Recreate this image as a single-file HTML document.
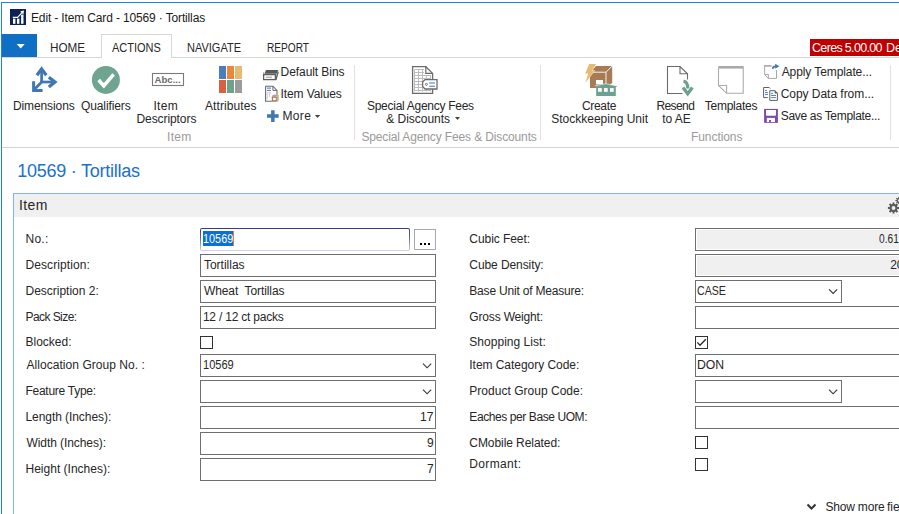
<!DOCTYPE html>
<html><head><meta charset="utf-8"><style>
*{box-sizing:border-box;margin:0;padding:0}
html,body{width:899px;height:514px;overflow:hidden;background:#fff;font-family:"Liberation Sans",sans-serif;position:relative}
.a{position:absolute}
.t{position:absolute;white-space:nowrap;font-family:"Liberation Sans",sans-serif}
.inp{position:absolute;height:23px;border:1px solid #6f6f6f;background:#fff}
.ro{background:#f0f0f0;box-shadow:inset 0 0 0 1px #fff}
.chk{position:absolute;width:13px;height:13px;border:1px solid #333;background:#fff}
svg{position:absolute;overflow:visible}

</style></head><body>
<!-- window frame -->
<div class="a" style="left:1px;top:2px;width:1px;height:512px;background:#1a84d8"></div>
<div class="a" style="left:1px;top:2px;width:898px;height:1px;background:#1a84d8"></div>
<!-- app icon -->
<svg style="left:0;top:0" width="40" height="40">
  <rect x="10" y="9" width="16" height="16" fill="#0b2252"/>
  <rect x="13" y="18.6" width="2.4" height="5.2" fill="#fff"/>
  <rect x="17" y="18.6" width="2.4" height="5.2" fill="#fff"/>
  <rect x="21.1" y="14.6" width="2.4" height="9.2" fill="#fff"/>
  <path d="M12.8 17.4 H17.6 L22.2 12.4" stroke="#fff" stroke-width="1.1" fill="none"/>
  <path d="M20.2 11.2 L24 10.6 L23.4 14.4 Z" fill="#fff"/>
</svg>
<!-- tab strip -->
<div class="a" style="left:2px;top:57px;width:897px;height:1px;background:#d6d6d6"></div>
<div class="a" style="left:2px;top:34px;width:35px;height:23px;background:#0f6fc5"></div>
<svg style="left:0;top:0" width="40" height="60"><path d="M16.7 44 L24.7 44 L20.7 48.6 Z" fill="#fff"/></svg>
<div class="a" style="left:101px;top:34px;width:71px;height:24px;border:1px solid #d6d6d6;border-bottom:none;background:#fff"></div>
<div class="a" style="left:810px;top:39px;width:89px;height:17px;background:#c00000"></div>
<!-- ribbon separators -->
<div class="a" style="left:354px;top:65px;width:1px;height:75px;background:#e2e2e2"></div>
<div class="a" style="left:540px;top:65px;width:1px;height:75px;background:#e2e2e2"></div>
<div class="a" style="left:890px;top:65px;width:1px;height:75px;background:#e2e2e2"></div>
<div class="a" style="left:2px;top:147px;width:897px;height:1px;background:#d5d5d5"></div>
<!-- ribbon icons -->
<svg style="left:0;top:0" width="899" height="150">
  <!-- Dimensions -->
  <g stroke="#3f77b5" fill="none">
    <path d="M41.6 82 V69" stroke-width="2.7"/>
    <path d="M36.9 75.3 L41.6 69 L46.3 75.3" stroke-width="3.2"/>
    <path d="M40.5 82 H54.5" stroke-width="2.7"/>
    <path d="M48.8 77.3 L55 82 L48.8 86.9" stroke-width="3.2"/>
    <path d="M42.5 81.2 L35 88.7" stroke-width="2.7"/>
    <path d="M33.6 81.3 V90.5 H42.6" stroke-width="3"/>
  </g>
  <!-- Qualifiers -->
  <circle cx="105.9" cy="79.9" r="14" fill="#6fa491"/>
  <path d="M98.6 80 L103.8 85.8 L113.6 74.4" stroke="#fff" stroke-width="3.6" fill="none"/>
  <!-- Item Descriptors -->
  <rect x="152.5" y="73.5" width="31" height="12" fill="#fff" stroke="#7a7a7a" stroke-width="1.1"/>
  <text x="154.6" y="83" font-family="Liberation Sans" font-weight="bold" font-size="9.6" fill="#6a6a6a" textLength="26" lengthAdjust="spacingAndGlyphs">Abc...</text>
  <!-- Attributes -->
  <rect x="219" y="66" width="7" height="13" fill="#4a7ebb"/>
  <rect x="227" y="66" width="7" height="13" fill="#e8873e"/>
  <rect x="235" y="66" width="7" height="13" fill="#e8b976"/>
  <rect x="219" y="80" width="7" height="13" fill="#d9603f"/>
  <rect x="227" y="80" width="7" height="13" fill="#6da08e"/>
  <rect x="235" y="80" width="7" height="13" fill="#9b9b9b"/>
  <!-- Default Bins -->
  <path d="M266 70.1 H278.3 L276.7 73.8 H264.4 Z" fill="#5a5a5a"/>
  <path d="M263 71.5 V73.8 H264.4 Z" fill="#9a9a9a"/>
  <rect x="263.6" y="74.6" width="11.8" height="5" fill="none" stroke="#5f5f5f" stroke-width="1.3"/>
  <path d="M266 77.2 H272" stroke="#9a9a9a" stroke-width="1"/>
  <path d="M275.8 80 L278.2 71.6" stroke="#5f5f5f" stroke-width="1.4"/>
  <!-- Item Values -->
  <path d="M277 94.8 V90.4 L272.9 86.2 H265.6 V101.3 H271.8" fill="none" stroke="#6a6a6a" stroke-width="1.1"/>
  <path d="M272.9 86.2 V90.4 H277" fill="none" stroke="#6a6a6a" stroke-width="1"/>
  <path d="M267 88.1 H271 M267 90.4 H271" stroke="#3f78b5" stroke-width="1"/>
  <path d="M267.2 92.8 H271 M267.2 92.8 V99.5 M269.5 92.8 V97" stroke="#c4c4c4" stroke-width="0.8" fill="none"/>
  <path d="M271.8 96 L273.3 94.8 H278.5 V100.5 L277.2 101.8 H271.8 Z" fill="#a27a55"/>
  <path d="M271.8 96 H277.2 V101.8 M277.2 96 L278.5 94.8" stroke="#fff" stroke-width="0.6" fill="none"/>
  <rect x="273" y="97.8" width="2.8" height="2.4" fill="#fff"/>
  <!-- More plus -->
  <path d="M267 116.1 H278.7 M272.85 110.2 V122" stroke="#3f78b5" stroke-width="3.5"/>
  <!-- More arrow -->
  <path d="M314.8 115 H320.2 L317.5 118.1 Z" fill="#444"/>
  <!-- Special Agency Fees icon -->
  <path d="M412.6 66.7 H425.8 L432.6 73.4 V93.3 H412.6 Z" fill="#fff" stroke="#6b6b6b" stroke-width="1.3"/>
  <path d="M425.8 66.7 V73.4 H432.6" fill="none" stroke="#6b6b6b" stroke-width="1.2"/>
  <g stroke="#bdbdbd" stroke-width="1">
    <path d="M414.5 69.5 V91.5 M418.5 69.5 V91.5 M422.5 69.5 V91.5 M426.5 75 V91.5 M430.5 75 V91.5"/>
    <path d="M414.5 69.5 H424 M414.5 72.5 H424 M414.5 75.5 H430.5 M414.5 78.5 H430.5 M414.5 81.5 H422 M414.5 84.5 H422 M414.5 87.5 H422 M414.5 90.5 H430.5"/>
  </g>
  <path d="M425 79.6 H437 V89 H425 L422.6 86.5 V82.1 Z" fill="#fff" stroke="#6b6b6b" stroke-width="1.3"/>
  <circle cx="426.4" cy="84.4" r="1" fill="none" stroke="#6b6b6b" stroke-width="0.9"/>
  <path d="M429.2 83 H435 M429.2 86.3 H435" stroke="#3f78b5" stroke-width="1.1"/>
  <!-- more arrow for & Discounts -->
  <path d="M455 117 H460 L457.5 120 Z" fill="#444"/>
  <!-- Create SKU -->
  <path d="M590 72 L596 66 H612.2 V83 L606 88.1 H590 Z" fill="#a87b56"/>
  <path d="M589.8 72.2 H606 L612.4 65.8 M606 72.2 V84" stroke="#fff" stroke-width="0.9" fill="none"/>
  <path d="M588.8 63.5 H596.5 L592.6 70.6 L595.2 70.6 L584.8 83.5 L587.8 73.8 L584.8 73.8 Z" fill="#fff"/>
  <path d="M589.2 64 H595.9 L592 71 H594.5 L585.2 83 L588.3 73.4 H585.2 Z" fill="#e8ba6f"/>
  <rect x="596" y="80" width="7" height="4.4" fill="#fff"/>
  <path d="M594.8 85.9 L605.8 83.7 L617 85.9 V86.8 H615.8 V95.9 H596.2 V86.8 H594.8 Z" fill="#6da08e"/>
  <path d="M594.8 85.9 L605.8 83.7 L617 85.9" stroke="#fff" stroke-width="0.6" fill="none"/>
  <rect x="598" y="88.1" width="3.8" height="3.7" fill="#fff"/>
  <rect x="604" y="88.1" width="3.7" height="3.7" fill="#fff"/>
  <rect x="610" y="88.1" width="3.7" height="3.7" fill="#fff"/>
  <!-- Resend -->
  <path d="M682.5 93.5 H667.5 V66.5 H680 L687.5 73.8 V79.6" fill="none" stroke="#6a6a6a" stroke-width="1.1"/>
  <path d="M680 66.5 V73.8 H687.5" fill="none" stroke="#6a6a6a" stroke-width="1.1"/>
  <path d="M683.5 81 Q687.8 82 687.8 88.5" fill="none" stroke="#6da08e" stroke-width="3.3"/>
  <path d="M683 87.5 L687.7 93.8 L692.4 87.5" fill="none" stroke="#6da08e" stroke-width="3.3"/>
  <!-- Templates -->
  <path d="M718.5 68 V85.5 L726.6 93.3 H743.2 V68" fill="none" stroke="#ababab" stroke-width="1.1"/>
  <rect x="718.3" y="66" width="25.4" height="2.6" fill="#a9a9a9"/>
  <path d="M718.7 85.5 H726.6 V93" fill="none" stroke="#ababab" stroke-width="1.1"/>
  <!-- Apply Template -->
  <rect x="764.1" y="65.1" width="7.6" height="1.6" fill="#a8a8a8"/>
  <path d="M764.6 65.5 V74.5 L768.4 78.4 H776.5 V70" fill="none" stroke="#a8a8a8" stroke-width="1"/>
  <path d="M764.8 74.5 H768.4 V78.2" fill="none" stroke="#a8a8a8" stroke-width="1"/>
  <path d="M772.6 68.8 Q773 66.3 775.5 66.3 H777.5" fill="none" stroke="#3f78b5" stroke-width="1.7"/>
  <path d="M775.2 63.8 L779.3 66.3 L775.2 68.8 Z" fill="#3f78b5"/>
  <!-- Copy Data -->
  <path d="M767.8 97.6 H763.6 V87.5 H769.2 L770.2 88.5" fill="none" stroke="#5f5f5f" stroke-width="1"/>
  <path d="M765 90.5 H767 M765 92.5 H768 M765 94.5 H768" stroke="#3f78b5" stroke-width="0.9"/>
  <path d="M769.8 90.7 H775 L777.4 93.1 V100.4 H769.8 Z" fill="#fff" stroke="#5f5f5f" stroke-width="1"/>
  <path d="M775 90.7 V93.1 H777.4" fill="#5f5f5f" stroke="#5f5f5f" stroke-width="0.8"/>
  <path d="M771 93.4 H773 M771 95.5 H776 M771 97.6 H776" stroke="#3f78b5" stroke-width="0.9"/>
  <!-- Save as Template -->
  <path d="M764.1 108.9 H777.9 V122.9 H764.1 Z" fill="#7e48ab"/>
  <path d="M766 109.9 H776 V115 Q776 115.7 775.3 115.7 H766.7 Q766 115.7 766 115 Z" fill="#fff"/>
  <rect x="766.8" y="117.9" width="8.2" height="4.2" fill="#fff"/>
  <rect x="769" y="120" width="1.9" height="2.1" fill="#7e48ab"/>
</svg>
<!-- content panel -->
<div class="a" style="left:13px;top:193px;width:886px;height:1px;background:#80b2f7"></div>
<div class="a" style="left:13px;top:193px;width:1px;height:321px;background:#80b2f7"></div>
<div class="a" style="left:14px;top:194px;width:885px;height:23px;background:#f0f0f0"></div>
<!-- gear -->
<svg style="left:0;top:0" width="899" height="514">
  <circle cx="893.5" cy="208" r="2.9" fill="none" stroke="#5a5a5a" stroke-width="2"/>
  <path d="M896.00 208.95 L899.10 208.95 L899.10 207.05 L896.00 207.05 Z M894.60 210.44 L896.79 212.63 L898.13 211.29 L895.94 209.10 Z M892.55 210.50 L892.55 213.60 L894.45 213.60 L894.45 210.50 Z M891.06 209.10 L888.87 211.29 L890.21 212.63 L892.40 210.44 Z M891.00 207.05 L887.90 207.05 L887.90 208.95 L891.00 208.95 Z M892.40 205.56 L890.21 203.37 L888.87 204.71 L891.06 206.90 Z M894.45 205.50 L894.45 202.40 L892.55 202.40 L892.55 205.50 Z M895.94 206.90 L898.13 204.71 L896.79 203.37 L894.60 205.56 Z " fill="#5a5a5a"/>
  <circle cx="898.8" cy="200.5" r="1.7" fill="none" stroke="#5a5a5a" stroke-width="1.3"/>
  <path d="M900.30 201.10 L902.20 201.10 L902.20 199.90 L900.30 199.90 Z M899.44 201.98 L900.78 203.33 L901.63 202.48 L900.28 201.14 Z M898.20 202.00 L898.20 203.90 L899.40 203.90 L899.40 202.00 Z M897.32 201.14 L895.97 202.48 L896.82 203.33 L898.16 201.98 Z M897.30 199.90 L895.40 199.90 L895.40 201.10 L897.30 201.10 Z M898.16 199.02 L896.82 197.67 L895.97 198.52 L897.32 199.86 Z M899.40 199.00 L899.40 197.10 L898.20 197.10 L898.20 199.00 Z M900.28 199.86 L901.63 198.52 L900.78 197.67 L899.44 199.02 Z " fill="#5a5a5a"/>
</svg>
<!-- left inputs -->
<div class="a" style="left:200px;top:228px;width:210px;height:23px;border-radius:2px;background:linear-gradient(#3a3888,#5c5aa8 40%,#d4d3ee)"></div><div class="a" style="left:201px;top:229px;width:208px;height:21px;border-radius:1px;background:#fff"></div>
<div class="a" style="left:203px;top:231px;width:30px;height:15px;background:#0a6fd6"></div>
<div class="a" style="left:233px;top:231px;width:1px;height:15px;background:#e08020"></div>
<div class="a" style="left:414px;top:229px;width:22px;height:21px;border:1px solid #a8a8b8;background:#fff"></div>
<div class="a" style="left:420px;top:243px;width:2px;height:2px;background:#000"></div>
<div class="a" style="left:424px;top:243px;width:2px;height:2px;background:#000"></div>
<div class="a" style="left:428px;top:243px;width:2px;height:2px;background:#000"></div>
<div class="inp" style="left:200px;top:254px;width:236px"></div>
<div class="inp" style="left:200px;top:280px;width:236px"></div>
<div class="inp" style="left:200px;top:306px;width:236px"></div>
<div class="chk" style="left:200px;top:336px"></div>
<div class="inp" style="left:200px;top:354px;width:236px"></div>
<div class="inp" style="left:200px;top:380px;width:236px"></div>
<div class="inp" style="left:200px;top:406px;width:236px"></div>
<div class="inp" style="left:200px;top:432px;width:236px"></div>
<div class="inp" style="left:200px;top:458px;width:236px"></div>
<!-- right inputs -->
<div class="inp ro" style="left:695px;top:228px;width:220px"></div>
<div class="inp ro" style="left:695px;top:254px;width:220px"></div>
<div class="inp" style="left:695px;top:280px;width:147px"></div>
<div class="inp" style="left:695px;top:306px;width:220px"></div>
<div class="chk" style="left:695px;top:336px"></div>
<div class="inp" style="left:695px;top:354px;width:220px"></div>
<div class="inp" style="left:695px;top:380px;width:147px"></div>
<div class="inp" style="left:695px;top:406px;width:220px"></div>
<div class="chk" style="left:695px;top:436px"></div>
<div class="chk" style="left:695px;top:458px"></div>
<!-- chevrons, check -->
<svg style="left:0;top:0" width="899" height="514">
  <g stroke="#333" stroke-width="1.1" fill="none">
    <path d="M423 363.6 L427.1 367.8 L431.2 363.6"/>
    <path d="M423 389.6 L427.1 393.8 L431.2 389.6"/>
    <path d="M829 289.3 L833.1 293.5 L837.2 289.3"/>
    <path d="M829 389.6 L833.1 393.8 L837.2 389.6"/>
  </g>
  <path d="M697.3 342.4 L700 345.3 L705.8 339.2" stroke="#2a2a2a" stroke-width="1.3" fill="none"/>
  <path d="M807.5 504.5 L811.5 508.5 L815.5 504.5" stroke="#333" stroke-width="2" fill="none"/>
</svg>

<div class=t style='left:31.00px;top:12px;font-size:12px;line-height:12px;letter-spacing:-0.143px;color:#1a1a1a;'>Edit - Item Card - 10569 · Tortillas</div>
<div class=t style='left:50.36px;top:42px;font-size:12.5px;line-height:12.5px;transform-origin:0 0;transform:scaleX(0.9361);color:#262626;'>HOME</div>
<div class=t style='left:112.00px;top:42px;font-size:12.5px;line-height:12.5px;transform-origin:0 0;transform:scaleX(0.8800);color:#262626;'>ACTIONS</div>
<div class=t style='left:186.92px;top:42px;font-size:12.5px;line-height:12.5px;transform-origin:0 0;transform:scaleX(0.8800);color:#262626;'>NAVIGATE</div>
<div class=t style='left:267.19px;top:42px;font-size:12.5px;line-height:12.5px;transform-origin:0 0;transform:scaleX(0.8098);color:#262626;'>REPORT</div>
<div class=t style='left:812.00px;top:42px;font-size:12.5px;line-height:12.5px;letter-spacing:-0.667px;color:#ffffff;'>Ceres 5.00.00</div>
<div class=t style='left:886.00px;top:42px;font-size:12.5px;line-height:12.5px;letter-spacing:0.000px;color:#ffffff;'>De</div>
<div class=t style='left:13.00px;top:100px;font-size:12px;line-height:12px;letter-spacing:-0.111px;color:#262626;'>Dimensions</div>
<div class=t style='left:81.00px;top:100px;font-size:12px;line-height:12px;letter-spacing:-0.111px;color:#262626;'>Qualifiers</div>
<div class=t style='left:153.50px;top:100px;font-size:12px;line-height:12px;letter-spacing:0.267px;color:#262626;'>Item</div>
<div class=t style='left:136.50px;top:113px;font-size:12px;line-height:12px;letter-spacing:-0.080px;color:#262626;'>Descriptors</div>
<div class=t style='left:205.00px;top:100px;font-size:12px;line-height:12px;letter-spacing:0.089px;color:#262626;'>Attributes</div>
<div class=t style='left:367.00px;top:100px;font-size:12px;line-height:12px;letter-spacing:-0.278px;color:#262626;'>Special Agency Fees</div>
<div class=t style='left:386.30px;top:113px;font-size:12px;line-height:12px;letter-spacing:-0.030px;color:#262626;'>&amp; Discounts</div>
<div class=t style='left:582.00px;top:100px;font-size:12px;line-height:12px;letter-spacing:-0.340px;color:#262626;'>Create</div>
<div class=t style='left:551.20px;top:113px;font-size:12px;line-height:12px;letter-spacing:0.006px;color:#262626;'>Stockkeeping Unit</div>
<div class=t style='left:656.40px;top:100px;font-size:12px;line-height:12px;letter-spacing:-0.580px;color:#262626;'>Resend</div>
<div class=t style='left:662.20px;top:113px;font-size:12px;line-height:12px;letter-spacing:0.000px;color:#262626;'>to AE</div>
<div class=t style='left:704.80px;top:100px;font-size:12px;line-height:12px;letter-spacing:-0.262px;color:#262626;'>Templates</div>
<div class=t style='left:280.60px;top:66px;font-size:12px;line-height:12px;letter-spacing:-0.073px;color:#262626;'>Default Bins</div>
<div class=t style='left:280.60px;top:88px;font-size:12px;line-height:12px;letter-spacing:-0.120px;color:#262626;'>Item Values</div>
<div class=t style='left:282.40px;top:110px;font-size:12px;line-height:12px;letter-spacing:0.400px;color:#262626;'>More</div>
<div class=t style='left:781.70px;top:66px;font-size:12px;line-height:12px;letter-spacing:-0.094px;color:#262626;'>Apply Template...</div>
<div class=t style='left:780.70px;top:88px;font-size:12px;line-height:12px;letter-spacing:-0.038px;color:#262626;'>Copy Data from...</div>
<div class=t style='left:780.70px;top:110px;font-size:12px;line-height:12px;letter-spacing:-0.311px;color:#262626;'>Save as Template...</div>
<div class=t style='left:167.00px;top:131px;font-size:12px;line-height:12px;letter-spacing:0.333px;color:#9a9a9a;'>Item</div>
<div class=t style='left:361.40px;top:131px;font-size:12px;line-height:12px;letter-spacing:-0.133px;color:#9a9a9a;'>Special Agency Fees &amp; Discounts</div>
<div class=t style='left:691.00px;top:131px;font-size:12px;line-height:12px;letter-spacing:-0.075px;color:#9a9a9a;'>Functions</div>
<div class=t style='left:17.30px;top:162px;font-size:18px;line-height:18px;letter-spacing:-0.250px;color:#1a6fcf;'>10569 · Tortillas</div>
<div class=t style='left:19.00px;top:198px;font-size:14px;line-height:14px;letter-spacing:0.400px;color:#262626;'>Item</div>
<div class=t style='left:25.50px;top:233px;font-size:12px;line-height:12px;letter-spacing:0.267px;color:#262626;'>No.:</div>
<div class=t style='left:25.50px;top:259px;font-size:12px;line-height:12px;letter-spacing:0.091px;color:#262626;'>Description:</div>
<div class=t style='left:25.50px;top:285px;font-size:12px;line-height:12px;letter-spacing:-0.008px;color:#262626;'>Description 2:</div>
<div class=t style='left:25.50px;top:311px;font-size:12px;line-height:12px;letter-spacing:-0.567px;color:#262626;'>Pack Size:</div>
<div class=t style='left:25.50px;top:336px;font-size:12px;line-height:12px;letter-spacing:0.000px;color:#262626;'>Blocked:</div>
<div class=t style='left:26.50px;top:359px;font-size:12px;line-height:12px;letter-spacing:0.048px;color:#262626;'>Allocation Group No. :</div>
<div class=t style='left:25.50px;top:385px;font-size:12px;line-height:12px;letter-spacing:-0.275px;color:#262626;'>Feature Type:</div>
<div class=t style='left:25.50px;top:411px;font-size:12px;line-height:12px;letter-spacing:-0.067px;color:#262626;'>Length (Inches):</div>
<div class=t style='left:26.50px;top:437px;font-size:12px;line-height:12px;letter-spacing:-0.079px;color:#262626;'>Width (Inches):</div>
<div class=t style='left:25.50px;top:463px;font-size:12px;line-height:12px;letter-spacing:0.007px;color:#262626;'>Height (Inches):</div>
<div class=t style='left:469.30px;top:233px;font-size:12px;line-height:12px;letter-spacing:-0.060px;color:#262626;'>Cubic Feet:</div>
<div class=t style='left:469.30px;top:259px;font-size:12px;line-height:12px;letter-spacing:-0.083px;color:#262626;'>Cube Density:</div>
<div class=t style='left:469.30px;top:285px;font-size:12px;line-height:12px;letter-spacing:-0.195px;color:#262626;'>Base Unit of Measure:</div>
<div class=t style='left:469.30px;top:311px;font-size:12px;line-height:12px;letter-spacing:-0.167px;color:#262626;'>Gross Weight:</div>
<div class=t style='left:469.30px;top:336px;font-size:12px;line-height:12px;letter-spacing:0.031px;color:#262626;'>Shopping List:</div>
<div class=t style='left:469.30px;top:359px;font-size:12px;line-height:12px;letter-spacing:-0.044px;color:#262626;'>Item Category Code:</div>
<div class=t style='left:469.30px;top:385px;font-size:12px;line-height:12px;letter-spacing:0.022px;color:#262626;'>Product Group Code:</div>
<div class=t style='left:469.30px;top:411px;font-size:12px;line-height:12px;letter-spacing:-0.411px;color:#262626;'>Eaches per Base UOM:</div>
<div class=t style='left:469.30px;top:437px;font-size:12px;line-height:12px;letter-spacing:-0.067px;color:#262626;'>CMobile Related:</div>
<div class=t style='left:469.30px;top:458px;font-size:12px;line-height:12px;letter-spacing:0.343px;color:#262626;'>Dormant:</div>
<div class=t style='left:203.90px;top:259px;font-size:12px;line-height:12px;letter-spacing:0.000px;color:#262626;'>Tortillas</div>
<div class=t style='left:203.90px;top:285px;font-size:12px;line-height:12px;letter-spacing:-0.080px;color:#262626;'>Wheat&nbsp; Tortillas</div>
<div class=t style='left:202.90px;top:311px;font-size:12px;line-height:12px;letter-spacing:-0.213px;color:#262626;'>12 / 12 ct packs</div>
<div class=t style='left:202.58px;top:359px;font-size:12px;line-height:12px;transform-origin:0 0;transform:scaleX(0.9219);color:#262626;'>10569</div>
<div class=t style='left:203.09px;top:233px;font-size:12px;line-height:12px;transform-origin:0 0;transform:scaleX(0.9062);color:#ffffff;'>10569</div>
<div class=t style='left:697.32px;top:285px;font-size:12px;line-height:12px;transform-origin:0 0;transform:scaleX(0.8806);color:#262626;'>CASE</div>
<div class=t style='left:697.18px;top:359px;font-size:12px;line-height:12px;transform-origin:0 0;transform:scaleX(1.0200);color:#262626;'>DON</div>
<div class=t style='left:825.40px;top:501px;font-size:12px;line-height:12px;letter-spacing:-0.175px;color:#262626;'>Show more</div>
<div class=t style='left:887.00px;top:501px;font-size:12px;line-height:12px;letter-spacing:0.000px;color:#262626;'>fields</div>
<div class=t style='left:420.00px;top:411px;font-size:12px;line-height:12px;letter-spacing:0.000px;color:#262626;'>17</div>
<div class=t style='left:427.00px;top:437px;font-size:12px;line-height:12px;letter-spacing:0.000px;color:#262626;'>9</div>
<div class=t style='left:427.00px;top:463px;font-size:12px;line-height:12px;letter-spacing:0.000px;color:#262626;'>7</div>
<div class=t style='left:879.00px;top:233px;font-size:12px;line-height:12px;transform-origin:0 0;transform:scaleX(0.8478);color:#262626;'>0.61</div>
<div class=t style='left:890.20px;top:259px;font-size:12px;line-height:12px;letter-spacing:0.000px;color:#262626;'>20</div>
</body></html>
